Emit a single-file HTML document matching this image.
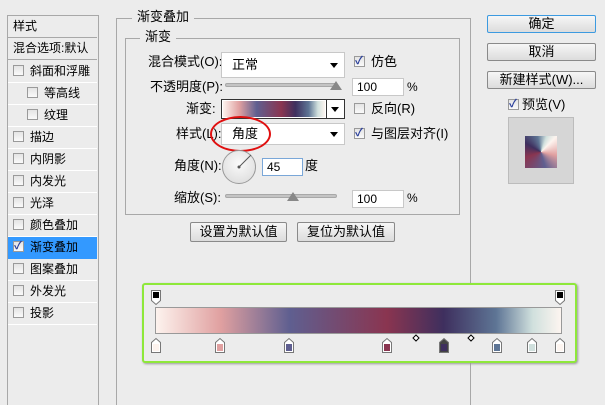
<!DOCTYPE html>
<html><head><meta charset="utf-8"><style>
*{margin:0;padding:0;box-sizing:border-box}
html,body{width:605px;height:405px;overflow:hidden}
body{background:#ececec;font:12px "Liberation Sans","Noto Sans CJK SC",sans-serif;color:#000;position:relative}
.a{position:absolute;white-space:nowrap;line-height:16px}
.row{position:absolute;left:8px;width:89px;height:22px;border-bottom:1px solid #fff;line-height:20px}
.cb{display:inline-block;width:11px;height:11px;border:1px solid #9a9a9a;background:linear-gradient(#e4e4e4,#fafafa);vertical-align:-1px;margin-right:6px;position:relative}
.cb.on::after{content:"✓";position:absolute;left:0;top:-3px;font-size:11px;line-height:14px;color:#2a3f9a;font-weight:bold}
.box{position:absolute;background:#fff;border:1px solid #c8c8c8;line-height:16px}
.btn{position:absolute;border:1px solid #8a8a8a;border-radius:2px;background:linear-gradient(#f6f6f6,#dcdcdc);text-align:center;line-height:16px}
.track{position:absolute;height:4px;border-radius:2px;background:#c4c4c4;border:1px solid #a8a8a8}
.arr{position:absolute;right:6px;width:0;height:0;border-left:4px solid transparent;border-right:4px solid transparent;border-top:5px solid #000}
</style></head><body>
<div class="a" style="left:7px;top:15px;width:92px;height:390px;border:1px solid #a8a8a8;border-bottom:none"></div>
<div class="row" style="top:16px;border-bottom:1px solid #a8a8a8;padding-left:5px">样式</div>
<div class="row" style="top:38px;border-bottom:1px solid #a8a8a8;padding-left:5px">混合选项:默认</div>
<div class="row" style="top:61px;padding-left:5px"><span class="cb"></span>斜面和浮雕</div>
<div class="row" style="top:83px;padding-left:19px"><span class="cb"></span>等高线</div>
<div class="row" style="top:105px;padding-left:19px"><span class="cb"></span>纹理</div>
<div class="row" style="top:127px;padding-left:5px"><span class="cb"></span>描边</div>
<div class="row" style="top:149px;padding-left:5px"><span class="cb"></span>内阴影</div>
<div class="row" style="top:171px;padding-left:5px"><span class="cb"></span>内发光</div>
<div class="row" style="top:193px;padding-left:5px"><span class="cb"></span>光泽</div>
<div class="row" style="top:215px;padding-left:5px"><span class="cb"></span>颜色叠加</div>
<div class="row" style="top:237px;padding-left:5px;background:#3399ff;border-bottom-color:#3399ff"><span class="cb on"></span>渐变叠加</div>
<div class="row" style="top:259px;padding-left:5px"><span class="cb"></span>图案叠加</div>
<div class="row" style="top:281px;padding-left:5px"><span class="cb"></span>外发光</div>
<div class="row" style="top:303px;padding-left:5px"><span class="cb"></span>投影</div>

<div class="a" style="left:116px;top:18px;width:355px;height:387px;border:1px solid #a8a8a8;border-bottom:none"></div>
<div class="a" style="left:132px;top:9px;background:#ececec;padding:0 5px;font-size:13px">渐变叠加</div>
<div class="a" style="left:125px;top:38px;width:335px;height:177px;border:1px solid #a8a8a8"></div>
<div class="a" style="left:140px;top:29px;background:#ececec;padding:0 5px;font-size:13px">渐变</div>

<div class="a" style="left:148px;top:54px;font-size:13px">混合模式(O):</div>
<div class="box" style="left:221px;top:52px;width:124px;height:26px;padding:4px 10px;font-size:13px">正常<span class="arr" style="top:10px"></span></div>
<div class="a" style="left:354px;top:54px;font-size:13px"><span class="cb on"></span>仿色</div>

<div class="a" style="left:150px;top:79px;font-size:13px">不透明度(P):</div>
<div class="track" style="left:225px;top:83px;width:112px"></div>
<div class="a" style="left:330px;top:81px;width:0;height:0;border-left:6px solid transparent;border-right:6px solid transparent;border-bottom:9px solid #888"></div>
<div class="box" style="left:352px;top:78px;width:52px;height:18px;padding:0 4px">100</div>
<div class="a" style="left:407px;top:79px">%</div>

<div class="a" style="left:186px;top:101px;font-size:13px">渐变:</div>
<div class="a" style="left:221px;top:99px;width:124px;height:20px;border:1px solid #333;background:#fff"></div>
<div class="a" style="left:223px;top:101px;width:102px;height:16px;background:linear-gradient(90deg,#fdf3ee,#e0a0a0 16%,#5f5f90 33%,#8a3550 57%,#3e2f5e 71%,#5e7595 84%,#d0e0dd 93%,#fdf5f0)"></div>
<div class="a" style="left:326px;top:100px;width:1px;height:18px;background:#333"></div>
<div class="a" style="left:331px;top:107px;width:0;height:0;border-left:4px solid transparent;border-right:4px solid transparent;border-top:5px solid #000"></div>
<div class="a" style="left:354px;top:101px;font-size:13px"><span class="cb"></span>反向(R)</div>

<div class="a" style="left:176px;top:126px;font-size:13px">样式(L):</div>
<div class="box" style="left:221px;top:123px;width:124px;height:22px;padding:2px 10px;font-size:13px">角度<span class="arr" style="top:8px"></span></div>
<div class="a" style="left:354px;top:126px;font-size:13px"><span class="cb on"></span>与图层对齐(I)</div>
<div class="a" style="left:210px;top:116px;width:61px;height:36px;border:2px solid #e01010;border-radius:50%"></div>

<div class="a" style="left:174px;top:158px;font-size:13px">角度(N):</div>
<div class="a" style="left:222px;top:150px;width:34px;height:34px;border-radius:50%;border:1px solid #999;background:radial-gradient(circle at 50% 40%,#fafafa,#d8d8d8)"></div>
<svg class="a" style="left:222px;top:150px" width="34" height="34"><line x1="17" y1="17" x2="29" y2="5" stroke="#555" stroke-width="1"/><circle cx="17" cy="17" r="1.5" fill="#555"/></svg>
<div class="box" style="left:262px;top:158px;width:41px;height:18px;padding:0 4px;border-color:#7aa7d8">45</div>
<div class="a" style="left:305px;top:158px;font-size:13px">度</div>

<div class="a" style="left:174px;top:190px;font-size:13px">缩放(S):</div>
<div class="track" style="left:225px;top:194px;width:112px"></div>
<div class="a" style="left:287px;top:192px;width:0;height:0;border-left:6px solid transparent;border-right:6px solid transparent;border-bottom:9px solid #888"></div>
<div class="box" style="left:352px;top:190px;width:52px;height:18px;padding:0 4px">100</div>
<div class="a" style="left:407px;top:190px">%</div>

<div class="btn" style="left:190px;top:222px;width:97px;height:20px;line-height:18px;font-size:13px">设置为默认值</div>
<div class="btn" style="left:297px;top:222px;width:98px;height:20px;line-height:18px;font-size:13px">复位为默认值</div>

<div class="btn" style="left:487px;top:15px;width:109px;height:18px;border-color:#3c9ae0;font-size:13px">确定</div>
<div class="btn" style="left:487px;top:43px;width:109px;height:18px;font-size:13px">取消</div>
<div class="btn" style="left:487px;top:71px;width:109px;height:18px;font-size:13px">新建样式(W)...</div>
<div class="a" style="left:508px;top:97px;font-size:13px"><span class="cb on" style="margin-right:3px"></span>预览(V)</div>
<div class="a" style="left:508px;top:117px;width:66px;height:67px;background:#d6d6d6;border:1px solid #bcbcbc"></div>
<div class="a" style="left:525px;top:136px;width:32px;height:32px;background:conic-gradient(from 45deg,#fdf3ee,#e0a0a0 16%,#5f5f90 33%,#8a3550 57%,#3e2f5e 71%,#5e7595 84%,#d0e0dd 93%,#fdf5f0)"></div>

<div class="a" style="left:142px;top:283px;width:435px;height:80px;border:2px solid #8ee83a;border-radius:3px;background:#ececec;box-shadow:1px 1px 2px #999"></div>
<div class="a" style="left:155px;top:307px;width:407px;height:27px;border:1px solid #999;background:linear-gradient(90deg,#fdf3ee,#e0a0a0 16%,#5f5f90 33%,#8a3550 57%,#3e2f5e 71%,#5e7595 84%,#d0e0dd 93%,#fdf5f0)"></div>
<svg class="a" style="left:0;top:0" width="605" height="405">
<g stroke="#777" stroke-width="1">
<path d="M151.5 290.5h9v10l-4.5 4-4.5-4z" fill="#fff"/><rect x="153" y="292" width="6" height="6" fill="#000" stroke="none"/>
<path d="M555.5 290.5h9v10l-4.5 4-4.5-4z" fill="#fff"/><rect x="557" y="292" width="6" height="6" fill="#000" stroke="none"/>
</g>
<g stroke="#777" stroke-width="1" fill="#fff">
<path d="M151.5 352.5v-10l4.5-4 4.5 4v10z"/>
<path d="M215.5 352.5v-10l4.5-4 4.5 4v10z"/>
<path d="M284.5 352.5v-10l4.5-4 4.5 4v10z"/>
<path d="M382.5 352.5v-10l4.5-4 4.5 4v10z"/>
<path d="M439.5 352.5v-10l4.5-4 4.5 4v10z" fill="#444"/>
<path d="M492.5 352.5v-10l4.5-4 4.5 4v10z"/>
<path d="M527.5 352.5v-10l4.5-4 4.5 4v10z"/>
<path d="M555.5 352.5v-10l4.5-4 4.5 4v10z"/>
<path d="M416 335l3 3-3 3-3-3z" stroke="#000"/>
<path d="M471 335l3 3-3 3-3-3z" stroke="#000"/>
</g>
<g stroke="none">
<rect x="153" y="344" width="6" height="7" fill="#fdf3ee"/>
<rect x="217" y="344" width="6" height="7" fill="#e0a0a0"/>
<rect x="286" y="344" width="6" height="7" fill="#5f5f90"/>
<rect x="384" y="344" width="6" height="7" fill="#8a3550"/>
<rect x="441" y="344" width="6" height="7" fill="#3e2f5e"/>
<rect x="494" y="344" width="6" height="7" fill="#5e7595"/>
<rect x="529" y="344" width="6" height="7" fill="#d0e0dd"/>
<rect x="557" y="344" width="6" height="7" fill="#fdf5f0"/>
</g>
</svg>
</body></html>
